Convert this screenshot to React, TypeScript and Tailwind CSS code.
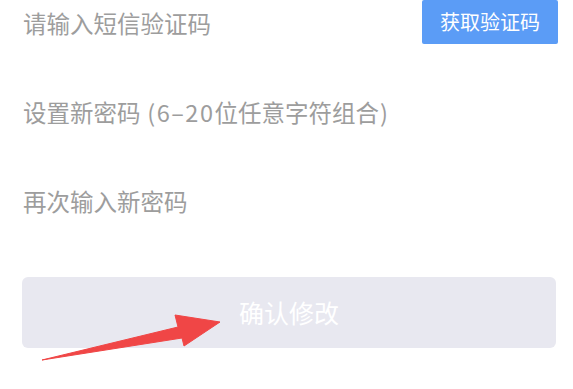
import React from 'react';

const font = { fontFamily: '"Noto Sans CJK SC", "Roboto", sans-serif' };

export default function App() {
  return (
    <div className="w-[573px] h-[389px] bg-white relative overflow-hidden" style={font}>
      <div className="pl-[23px] pr-[15px]">
        {/* SMS code row */}
        <div className="h-[45px] flex items-center justify-between">
          <span className="text-[23.5px] leading-[30px] text-[#9d9d9d]">请输入短信验证码</span>
          <button className="h-[44px] w-[136px] self-start bg-[#5b9cf6] rounded-[2px] text-white text-[20px] flex items-center justify-center">
            获取验证码
          </button>
        </div>

        <div className="mt-[52px] text-[23.5px] leading-[30px] text-[#9d9d9d]">
          设置新密码<span className="tracking-[1.5px]"> (6–20</span>位任意字符组合<span className="pl-[1px]">)</span>
        </div>

        <div className="mt-[59px] text-[23.5px] leading-[30px] text-[#9d9d9d]">
          再次输入新密码
        </div>

        <button className="mt-[61px] w-[534px] h-[71px] -ml-[1px] rounded-[6px] bg-[#e8e8f0] text-white text-[25px] flex items-center justify-center">
          确认修改
        </button>
      </div>

      {/* annotation arrow */}
      <svg className="absolute inset-0 pointer-events-none" width="573" height="389" viewBox="0 0 573 389">
        <polygon
          points="42,360 178,327 175,315 220,322 184,346 182,338"
          fill="#f04646"
          stroke="#f04646"
          strokeWidth="1"
          strokeLinejoin="round"
        />
      </svg>
    </div>
  );
}
